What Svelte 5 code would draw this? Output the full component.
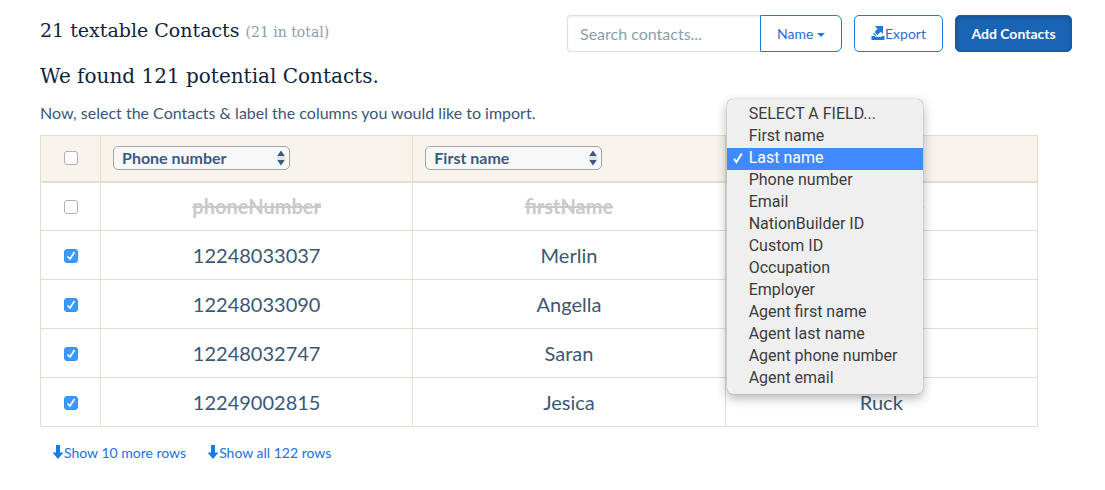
<script>
  const fields = [
    'SELECT A FIELD...', 'First name', 'Last name', 'Phone number', 'Email',
    'NationBuilder ID', 'Custom ID', 'Occupation', 'Employer',
    'Agent first name', 'Agent last name', 'Agent phone number', 'Agent email'
  ];
  let columns = $state(['Phone number', 'First name', 'Last name']);
  const openColumn = 2;
  let rows = $state([
    { picked: false, cells: ['phoneNumber', 'firstName', 'lastName'] },
    { picked: true, cells: ['12248033037', 'Merlin', ''] },
    { picked: true, cells: ['12248033090', 'Angella', ''] },
    { picked: true, cells: ['12248032747', 'Saran', ''] },
    { picked: true, cells: ['12249002815', 'Jesica', 'Ruck'] }
  ]);
  let all = $state(false);
  const more = ['Show 10 more rows', 'Show all 122 rows'];
</script>

<main>
  <header>
    <h1>21 textable Contacts <small>(21 in total)</small></h1>
    <div class="tools">
      <div class="search">
        <input type="text" placeholder="Search contacts..." aria-label="Search contacts" />
        <button class="outline name">Name <span class="caret"></span></button>
      </div>
      <button class="outline export">
        <svg width="14" height="14" viewBox="0 0 14 14" aria-hidden="true">
          <path d="M.5 10H4l.8 1h5.400l.8-1h2.500v4H.5z" fill="currentColor" />
          <path d="M4 0h8v8L9.800 5.800 6.500 9 3.500 6 6.500 2.800z" fill="currentColor" />
          <path d="M2.500 7.200L5 9.600" stroke="currentColor" stroke-width="1.200" />
        </svg>Export
      </button>
      <button class="primary">Add Contacts</button>
    </div>
  </header>

  <h2>We found 121 potential Contacts.</h2>
  <p>Now, select the Contacts &amp; label the columns you would like to import.</p>

  <div class="sheet">
    <table>
      <thead>
        <tr>
          <th class="pick"><input type="checkbox" aria-label="Select all rows" bind:checked={all} /></th>
          {#each columns as column, i}
            <th>
              <div class="field">
                <select aria-label={`Field for column ${i + 1}`} bind:value={columns[i]}>
                  {#each fields as field}<option>{field}</option>{/each}
                </select>
                <svg width="8" height="16" viewBox="0 0 8 16" aria-hidden="true">
                  <path d="M4 .5l3.800 5.500H.2zM4 15.500L.2 10h7.600z" fill="#3b5b80" />
                  <path d="M0 7h8M0 9h8" stroke="#c3ced8" />
                </svg>
                {#if i === openColumn}
                  <ul role="listbox" aria-label="Fields">
                    {#each fields as field}
                      <li role="option" aria-selected={field === column}>
                        <span class="mark">
                          {#if field === column}
                            <svg width="10" height="12" viewBox="0 0 10 12" aria-hidden="true">
                              <path d="M1 6.800L3.500 10 8.800 1.500" fill="none" stroke="#fff" stroke-width="2" />
                            </svg>
                          {/if}
                        </span>{field}
                      </li>
                    {/each}
                  </ul>
                {/if}
              </div>
            </th>
          {/each}
        </tr>
      </thead>
      <tbody>
        {#each rows as row, r}
          <tr class:skipped={r === 0}>
            <td class="pick"><input type="checkbox" aria-label={`Select row ${r + 1}`} bind:checked={row.picked} /></td>
            {#each row.cells as cell}<td>{cell}</td>{/each}
          </tr>
        {/each}
      </tbody>
    </table>
    <nav>
      {#each more as label}
        <a href="#rows">
          <svg width="12" height="14" viewBox="0 0 12 14" aria-hidden="true">
            <path d="M4 0h4v7.500h3.500L6 14 .5 7.500H4z" fill="#1a7ce0" />
          </svg>{label}
        </a>
      {/each}
    </nav>
  </div>
</main>

<style>
  :global(body) { margin: 0; background: #fff; }
  main {
    padding: 15px 33px 0 40px;
    font-family: Lato, sans-serif;
    font-size: 16px;
    color: #3b5775;
  }
  header { display: flex; justify-content: space-between; align-items: center; height: 37px; }
  h1, h2 {
    margin: 0;
    font-family: "DejaVu Serif", serif;
    font-weight: 400;
    line-height: 28px;
    color: #0f1f3d;
    white-space: nowrap;
  }
  h1 { padding-bottom: 6px; font-size: 19px; }
  h2 { margin-top: 10px; font-size: 20px; }
  small { font-size: 14px; color: #8c9db1; }
  p { margin: 12px 0 11px; line-height: 22px; }
  .tools { display: flex; gap: 12px; }
  button, .search input {
    box-sizing: border-box;
    height: 37px;
    font-family: Lato, sans-serif;
    font-size: 14px;
    border-radius: 5px;
  }
  .search { display: flex; }
  .search input {
    width: 193px;
    padding: 0 12px;
    font-size: 16px;
    border: 1px solid #e0dfd3;
    border-right: 0;
    border-radius: 4px 0 0 4px;
    box-shadow: inset 0 1px 2px rgba(0, 0, 0, 0.07);
    outline: none;
  }
  .search input::placeholder { color: #8c9db1; opacity: 1; }
  .outline { background: #fff; border: 1px solid #1a7ce0; color: #2a6cdb; }
  .name { width: 82px; padding: 0; border-radius: 0 6px 6px 0; }
  .caret {
    display: inline-block;
    border: 4px solid transparent;
    border-top-color: #1a7ce0;
    border-bottom: 0;
    vertical-align: middle;
  }
  .export { width: 89px; padding: 0; }
  .export svg { color: #1a7ce0; vertical-align: -1px; }
  .primary {
    width: 117px;
    padding: 0;
    color: #fff;
    font-weight: 700;
    background: #1964b4;
    border: 1px solid #175ca5;
    box-shadow: inset 0 2px 4px rgba(0, 0, 0, 0.18);
  }
  .sheet { margin-right: 34px; }
  table { width: 100%; border-collapse: collapse; table-layout: fixed; }
  th, td { box-sizing: border-box; height: 49px; padding: 0; border: 1px solid #e1dfd0; }
  th { height: 46px; background: #f8f4ec; border-bottom-width: 2px; }
  td { font-size: 20px; line-height: 24px; text-align: center; }
  .pick { width: 60px; text-align: center; }
  td.pick { padding-top: 2px; }
  .skipped td { color: #c9c9c9; font-weight: 700; text-decoration: line-through; }
  input[type='checkbox'] {
    appearance: none;
    display: block;
    box-sizing: border-box;
    width: 14px;
    height: 14px;
    margin: 0 auto;
    border: 1px solid #b0b0b0;
    border-radius: 3px;
    background: #fff;
  }
  input[type='checkbox']:checked {
    border-color: #3290f8;
    background: #3b99fc url("data:image/svg+xml,%3Csvg xmlns='http://www.w3.org/2000/svg' viewBox='0 0 12 12'%3E%3Cpath d='M2.500 6.500L5 9l4.500-7' fill='none' stroke='white' stroke-width='1.600'/%3E%3C/svg%3E");
  }
  .field { position: relative; width: 177px; margin-left: 12px; }
  .field select {
    appearance: none;
    display: block;
    box-sizing: border-box;
    width: 100%;
    height: 24px;
    padding: 0 24px 2px 8px;
    border: 1px solid #a5a5a5;
    border-radius: 5px;
    background: #f8f8f8;
    color: #3b5b80;
    font: 700 16px Lato, sans-serif;
  }
  .field > svg { position: absolute; right: 5px; top: 4px; pointer-events: none; }
  ul {
    position: absolute;
    z-index: 2;
    top: -47px;
    left: -11px;
    box-sizing: border-box;
    width: 196px;
    margin: 0;
    padding: 5px 0 4px;
    list-style: none;
    background: #efefef;
    border-radius: 6px;
    box-shadow: 0 0 1px rgba(0, 0, 0, 0.5), 0 4px 12px rgba(0, 0, 0, 0.3);
    color: #3c3c3c;
    font: 400 16px Roboto, sans-serif;
    text-align: left;
  }
  li { display: flex; height: 22px; line-height: 20px; white-space: nowrap; }
  li[aria-selected='true'] { background: #4189ff; color: #fff; }
  .mark { width: 16px; padding: 4px 0 0 6px; line-height: 0; }
  nav { display: flex; gap: 21px; padding: 16px 12px; }
  a { color: #2470dc; font-size: 14px; line-height: 20px; text-decoration: none; }
  a svg { vertical-align: -1px; }
</style>
